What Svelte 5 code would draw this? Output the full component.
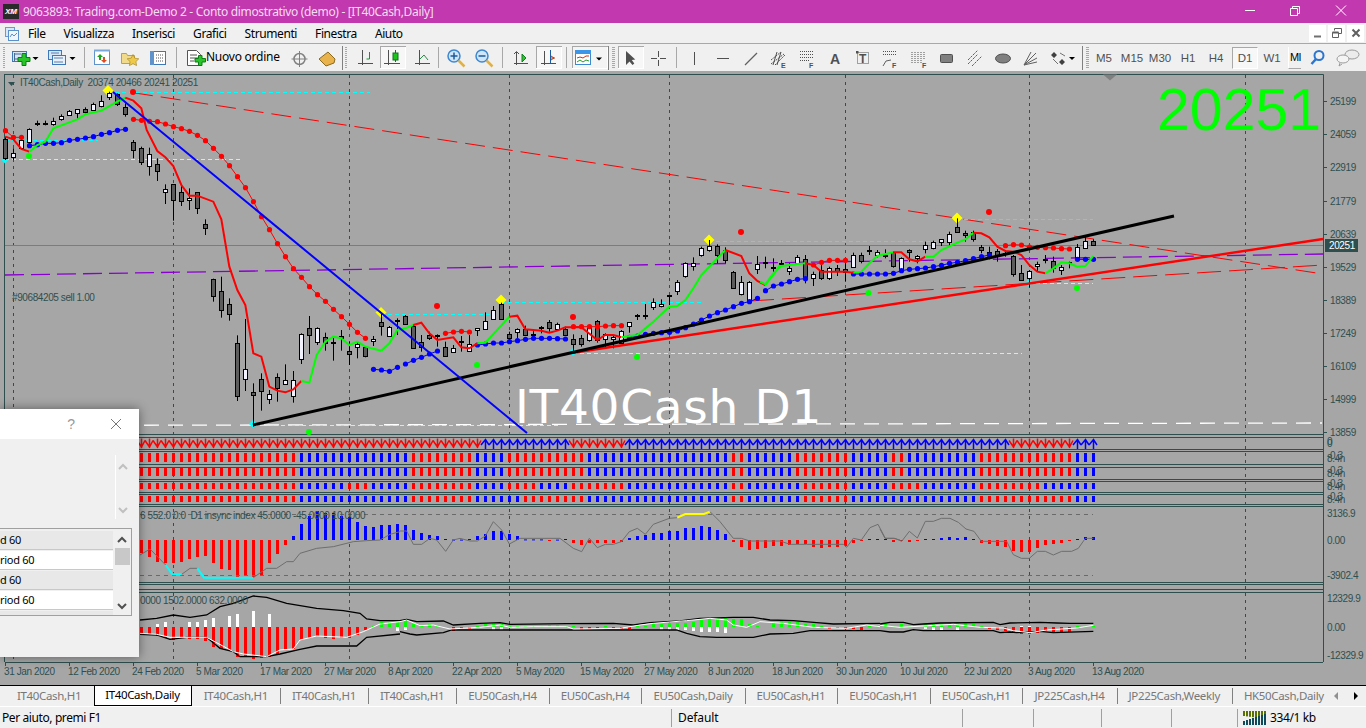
<script>
  const RED = '#ff0000', BLUE = '#0000ff', LIME = '#00ff00', SLATE = '#2f4f4f';
  const cx = (i) => 5 + 8 * i;
  const poly = (ox, oy, a) => {
    const out = [];
    for (let k = 0; k < a.length; k += 2) out.push(`${ox + a[k] / 3},${oy + a[k + 1] / 3}`);
    return out.join(' ');
  };

  const menu = ['File', 'Visualizza', 'Inserisci', 'Grafici', 'Strumenti', 'Finestra', 'Aiuto'];
  const tabs = ['IT40Cash,H1', 'IT40Cash,Daily', 'IT40Cash,H1', 'IT40Cash,H1', 'IT40Cash,H1', 'EU50Cash,H4', 'EU50Cash,H4', 'EU50Cash,Daily', 'EU50Cash,H1', 'EU50Cash,H1', 'EU50Cash,H1', 'JP225Cash,H4', 'JP225Cash,Weekly', 'HK50Cash,Daily'];
  const periods = ['M5', 'M15', 'M30', 'H1', 'H4', 'D1', 'W1'];

  const dates = ['31 Jan 2020', '12 Feb 2020', '24 Feb 2020', '5 Mar 2020', '17 Mar 2020', '27 Mar 2020', '8 Apr 2020', '22 Apr 2020', '5 May 2020', '15 May 2020', '27 May 2020', '8 Jun 2020', '18 Jun 2020', '30 Jun 2020', '10 Jul 2020', '22 Jul 2020', '3 Aug 2020', '13 Aug 2020'];
  const prices = [[25199, 101], [24059, 134], [22919, 167], [21779, 201], [20639, 234], [19529, 267], [18389, 300], [17249, 333], [16109, 366], [14999, 399], [13859, 432]];
  const subLabels = [['0', 445], ['0', 447], ['-0.3', 459], ['8.4n', 462], ['-0.3', 474], ['8.4n', 477], ['-0.3', 487], ['8.4n', 490], ['-0.3', 500], ['8.4n', 503], ['3136.9', 517], ['0.00', 544], ['-3902.4', 579], ['12329.9', 602], ['0.00', 631], ['-12329.9', 659]];
  const grid = [13.5, 173.5, 349.5, 509.5, 669.5, 845.5, 1029.5, 1245.5];
  const seps = [434, 437, 449, 451, 464, 467, 479, 481, 492, 494, 504, 506, 582, 584, 589, 592, 662];

  // candles: top, bottom, wick top, wick bottom, w(hite)/d(ark), in zoomed units
  const seg = (from, oy, rows) => rows.map((r, k) => ({ x: cx(from + k), t: oy + r[0] / 3, b: oy + r[1] / 3, wt: oy + r[2] / 3, wb: oy + r[3] / 3, w: r[4] }));
  const candles = [
    ...seg(0, 80, [[178,235,170,240,0],[218,230,205,240,1],[180,205,175,208,1],[148,188,145,190,1],[128,131,122,138,0],[128,131,122,136,0],[124,134,113,137,1],[108,116,103,122,1],[92,104,90,106,1],[88,100,88,118,1],[87,95,82,100,0],[72,89,68,92,1],[64,79,46,82,1],[40,52,35,60,1],[43,74,40,78,0],[80,100,70,110,0],[187,210,180,235,0],[203,244,200,255,0],[223,260,203,287,1],[253,274,235,303,0],[328,338,313,372,1],[313,361,313,422,0],[335,361,313,378,0],[355,361,325,390,1],[337,386,337,402,0],[433,445,418,465,0],[598,650,596,665,0],[634,691,590,713,0],[673,703,655,722,0],[790,949,766,963,0],[868,898,717,933,1],[937,946,910,1040,0],[898,934,880,992,0],[943,958,930,972,1],[892,925,880,965,0],[899,910,853,912,1],[901,949,873,968,1],[763,838,760,852,1],[745,767,708,822,0],[745,788,742,795,1],[770,787,758,812,0],[787,790,770,842,0],[769,776,750,812,0],[814,823,785,855,0],[792,802,785,835,1],[800,826,798,832,0],[778,785,768,798,1]]),
    ...seg(47, 200, [[367,380,340,407,0],[380,407,378,407,1],[361,364,355,405,0],[347,370,345,372,0],[378,445,375,447,0],[425,440,405,455,0],[406,415,395,420,0],[406,409,403,440,0],[440,467,425,470,0],[443,455,435,458,1],[424,427,408,455,0],[431,451,405,452,1],[385,390,385,408,1],[362,385,337,387,1],[331,358,318,360,1],[312,358,308,360,0],[401,413,395,425,0],[388,398,385,415,1],[388,406,377,408,0],[401,404,393,418,0],[381,384,378,400,0],[367,385,360,395,0],[373,388,368,390,1],[386,404,380,405,0],[418,433,403,455,0],[415,434,405,440,0],[385,422,380,425,1],[362,418,360,428,0],[403,418,400,445,1],[410,415,405,445,1],[392,427,390,430,1],[367,380,367,398,1],[346,349,342,360,0],[346,349,312,358,0],[305,320,295,330,1],[313,320,298,322,1],[286,289,287,315,0],[247,275,240,285,1],[190,230,187,233,1],[190,199,172,212,1],[145,166,140,170,1],[139,152,120,155,1],[139,167,133,190,0],[150,180,142,190,0],[217,265,213,267,0],[247,284,228,286,1],[247,302,243,305,1],[193,208,168,222,1]]),
    ...seg(95, 200, [[187,190,170,205,0],[200,203,175,215,0],[189,192,180,200,0],[203,213,190,225,1],[172,190,165,193,1],[178,236,165,250,0],[222,235,215,258,1],[210,233,195,240,0],[205,236,200,240,1],[205,215,195,228,0],[208,217,180,245,0],[165,200,158,203,1],[165,183,158,190,0],[151,154,138,165,0],[157,167,150,172,1],[164,167,148,175,0],[157,200,155,203,0],[175,215,172,218,1],[151,157,148,185,0],[169,176,165,190,1],[136,149,125,160,1],[127,146,122,148,1],[118,128,118,138,1],[102,125,95,140,1],[82,97,55,97,0],[100,107,92,125,0],[97,118,92,125,0],[142,152,135,160,0],[155,160,140,178,0],[153,165,147,185,0],[159,162,150,170,0],[168,222,165,230,0],[220,241,195,243,0],[214,235,210,262,1],[193,200,185,215,1],[177,180,165,190,0],[184,206,170,218,0],[200,208,195,225,1],[187,190,185,205,0],[142,172,132,175,1],[122,143,110,145,1],[124,136,118,137,0]])
  ];

  // moving average, alternating colour
  const maLines = [
    [RED, 0, 80, [16,170,40,178,64,207,88,215]],
    [LIME, 0, 80, [88,215,112,195,136,185,160,145,208,127,232,118,256,103,304,92,352,65,376,53]],
    [RED, 0, 80, [376,53,400,62,424,85,440,150,472,213,496,232,520,258,544,315,568,347,592,347,640,365,664,418,688,560,712,630,736,675,760,820,784,830,808,920,832,932,856,937,880,928,904,903]],
    [LIME, 0, 80, [904,903,928,908,950,825,976,785,1000,770,1024,775,1048,795,1072,785,1096,800,1144,812]],
    [LIME, 380, 200, [4,452,28,430,52,390,76,385,100,375]],
    [RED, 380, 200, [100,375,124,368,148,400,172,420,220,412,244,442,268,445,292,430]],
    [LIME, 380, 200, [292,430,316,428,388,350]],
    [RED, 380, 200, [388,350,412,347,436,388,484,392,508,398,532,392,556,382,604,382,652,420,676,405,700,405,724,412]],
    [LIME, 380, 200, [724,412,748,408,772,405,820,365,868,320,892,318,916,300,940,265,964,225,1036,150]],
    [RED, 380, 200, [1036,150,1084,168,1108,220,1132,243,1156,255]],
    [LIME, 380, 200, [1156,255,1180,225,1200,195]],
    [LIME, 760, 200, [0,245,16,253,40,220,64,198,112,192,136,190]],
    [RED, 760, 200, [136,190,160,195,184,215,232,215,256,215,280,218]],
    [LIME, 760, 200, [280,218,304,215,328,190,352,168,400,157]],
    [RED, 760, 200, [400,157,424,157,448,178,472,184,496,170]],
    [LIME, 760, 200, [496,170,520,170,544,150,592,128,616,118,640,98]],
    [RED, 760, 200, [640,98,664,100,688,112,712,140,736,153,760,155,784,165,808,195,832,215,856,220]],
    [LIME, 760, 200, [856,220,880,205,904,187,928,190,952,200,976,198,1000,168]]
  ];

  const dotRuns = [
    [RED, 0, 80, [152,172,172]],
    [BLUE, 3, 80, [197,194,190,190,188,181,178,174,170,163,158,151,148]],
    [RED, 16, 80, [118,121,124,125,132,140,146,154,166,182,205,229,257,290,323,365,410,449,491,530,566,592,620,644,664,688,710,733,757,775]],
    [BLUE, 46, 80, [868,870,874,862]],
    [BLUE, 50, 200, [492,481,472,462,453]],
    [RED, 55, 200, [400,396,394,396]],
    [BLUE, 59, 200, [435,432,429,429,425,422,418,415,415,415,416,417]],
    [RED, 71, 200, [380,380,380,380,378,377,377]],
    [BLUE, 78, 200, [412,408,403,400,398,397,393,383,372,360,348,338,330,320,310,305,295]],
    [BLUE, 95, 200, [272,258,252,245,238,236]],
    [RED, 101, 200, [195,187,181,181,181]],
    [BLUE, 106, 200, [222,222,222,222,222,220,212,208,206,204,200,196,190,187,182,176,170,165]],
    [RED, 125, 200, [137,134,135,141,142,143,144,146,147]],
    [BLUE, 134, 200, [178,178,178]]
  ].map(([c, from, oy, ys]) => ({ c, pts: ys.map((y, k) => [cx(from + k) + .5, oy + y / 3]) }));

  const spots = [[RED,133,92],[RED,437,306],[RED,573,317],[RED,741,232],[RED,989,212],[LIME,29,156],[LIME,309,432],[LIME,477,365],[LIME,637,357],[LIME,868.5,293],[LIME,1077,288]];
  const diamonds = [['#ffff00',108,90.5,5.5],['#ffff00',381,312.5,5.5],['#ffff00',501,300,5.5],['#ffff00',709,240,5.5],['#ffff00',957,218,5.5],['#00ffff',5,160,3.5],['#00ffff',253,424,4],['#00ffff',573,352,4],['#00ffff',1029,283,4]];
  const dashes = [['#00ffff',108,92.5,370],['#00ffff',5,140.5,98],['#ffff00',5,159.5,243],['#00ffff',381,314.5,495],['#00ffff',501,302.5,701],['#00ffff',709,241.5,940],['#00ffff',957,219.5,1093],['#ffff00',253,425.5,561],['#ffff00',573,353.5,1022],['#ffff00',1029,283.5,1093]];

  // signal strips
  const runs = (list) => {
    const m = {};
    for (const [a, b, c] of list) for (let i = a; i <= b; i++) m[i] = c;
    return m;
  };
  const R = RED, B = BLUE;
  const rowA = runs([[17,36,R],[37,50,B],[51,58,R],[59,62,B],[63,72,R],[73,90,B],[91,92,R],[93,98,B],[99,105,R],[106,110,B],[111,112,R],[113,121,B],[122,133,R],[134,136,B]]);
  const rowC = runs([[17,36,R],[37,42,B],[43,45,R],[46,50,B],[51,58,R],[59,62,B],[63,66,R],[67,70,B],[71,77,R],[78,90,B],[91,92,R],[93,99,B],[100,105,R],[106,110,B],[111,114,R],[115,121,B],[122,129,R],[130,136,B]]);
  const rowD = runs([[17,36,R],[37,50,B],[51,58,R],[59,64,B],[65,72,R],[73,90,B],[91,92,R],[93,99,B],[100,105,R],[106,121,B],[122,133,R],[134,136,B]]);
  const rows = [[rowA, 453, 9], [rowA, 468, 8], [rowC, 483, 6], [rowD, 496, 6]];
  const idx = Array.from({ length: 120 }, (_, k) => k + 17);
  const arrowDir = runs([[17,59,R],[60,70,B],[71,77,R],[78,125,B],[126,133,R],[134,136,B]]);

  const hist = [-13,-17,-22,-23,-23,-22,-19,-17,-16,-23,-29,-30,-37,-36,-37,-35,-23,-14,-5,4,16,24,29,27,27,24,23,18,14,13,15,15,16,
    15,10,7,5,4,1,.4,.4,1,4,6,9,9,6,4,.6,.6,.6,-1,.4,1,-3,-5,-3,-3,-3,-3,-2,2,4,5,7,7,9,9,12,12,14,13,10,6,-2,-7,-10,-9,-8,-6,-6,-5,-4,-4,-7,-8,-7,-7,-6,-3,-1,1,1,
    1,-2,-1,-2,-1,1,1,2,3,2,3,1,-3,-4,-6,-7,-11,-12,-12,-8,-5,-4,-3,-1,1,3,3];

  // lower oscillator: [up colour, up px, down colour, down px]
  const W = '#ffffff', G = LIME;
  const osc = [[0,0,R,8],[0,0,R,8],[W,3,R,9],[W,5,R,11],[0,0,R,13],[0,0,R,11],[W,5,R,12],[W,5,R,12],[W,7,R,14],[W,9,R,20],[0,0,R,22],[W,11,R,23],[W,13,R,30],[0,0,R,29],[W,16,R,32],[0,0,R,31],[W,13,R,30],[0,0,R,27],[0,0,R,23],[0,0,R,22],[0,0,R,13],[0,0,R,11],[0,0,R,9],[0,0,R,11],[0,0,R,12],[0,0,R,11],[0,0,R,11],[0,0,R,8],[0,0,R,3],[G,1,0,0],[G,5,0,0],[G,5,0,0],[G,5,W,4],
    [G,7,W,3],[G,3,0,0],[G,2,0,0],[G,3,0,0],[G,2,0,0],[0,0,0,0],[0,0,R,4],[0,0,R,2],[0,0,R,2],[G,1,0,0],[G,3,0,0],[G,4,W,3],[G,4,W,3],[G,1,0,0],[G,1,0,0],[G,1,0,0],[G,1,0,0],[G,1,0,0],[G,2,0,0],[G,2,0,0],[G,1,0,0],[G,1,0,0],[0,0,R,3],[0,0,R,2],[0,0,R,1],[G,1,0,0],[0,0,R,2],[0,0,R,2],[0,0,R,3],[G,1,0,0],[G,1,0,0],[G,3,0,0],[G,3,W,3],[G,4,W,3],[G,4,W,3],[G,4,W,3],[G,5,W,4],[G,7,W,5],[G,8,W,5],[G,9,W,5],[G,9,W,6],[G,8,0,0],[G,8,0,0],[G,3,0,0],[G,1,0,0],[0,0,0,0],[G,5,0,0],[G,6,0,0],[G,5,0,0],[G,5,0,0],[G,3,0,0],[G,3,0,0],[G,1,0,0],[0,0,R,2],[0,0,R,1],[0,0,R,2],[0,0,R,2],[0,0,R,3],[G,2,0,0],[G,1,0,0],
    [G,3,0,0],[G,1,0,0],[G,3,0,0],[G,1,0,0],[0,0,0,0],[G,3,W,2],[G,3,W,3],[G,3,W,3],[G,4,0,0],[G,5,W,4],[G,4,0,0],[G,3,0,0],[G,1,0,0],[0,0,R,2],[0,0,R,3],[0,0,R,4],[0,0,R,6],[W,1,R,7],[W,1,R,7],[0,0,R,6],[0,0,R,4],[0,0,R,5],[0,0,R,6],[0,0,R,5],[G,1,0,0],[G,1,0,0],[G,1,0,0]];
</script>

<div class="app">
  <header class="title">
    <span class="logo"><b>XM</b></span>
    <span class="title-text">9063893: Trading.com-Demo 2 - Conto dimostrativo (demo) - [IT40Cash,Daily]</span>
    <svg class="win" width="138" height="23" viewBox="1228 0 138 23">
      <path d="M1245 10.5h10" stroke="#fff" fill="none" />
      <path d="M1290.5 8.5h7v7h-7zM1292.5 8.5v-2h7v7h-2" stroke="#fff" fill="none" />
      <path d="M1336 5.5l10 10M1346 5.5l-10 10" stroke="#fff" fill="none" />
    </svg>
  </header>

  <nav class="menu">
    <svg class="menu-ico" width="16" height="16" viewBox="0 0 16 16">
      <rect x="1.5" y="1.5" width="9" height="9" fill="#d8e8f8" stroke="#6a9bd0" />
      <rect x="4.5" y="4.5" width="10" height="10" fill="#eef5fc" stroke="#5a8fc8" />
      <path d="M6 11l2-3 2 2 3-3" stroke="#5a8fc8" fill="none" />
    </svg>
    {#each menu as m}<span class="menu-item">{m}</span>{/each}
    <span class="fill"></span>
    <span class="mdi"><svg width="12" height="12" viewBox="0 0 12 12"><path d="M2 9.5h7" stroke="#707070" stroke-width="2" /></svg></span>
    <span class="mdi"><svg width="12" height="12" viewBox="0 0 12 12"><path d="M1.5 5.5h6v5h-6zM3.5 3.5v-2h7v5h-3" stroke="#606060" fill="none" /><path d="M1.5 5.5h6" stroke="#606060" stroke-width="2" /></svg></span>
    <span class="mdi"><svg width="12" height="12" viewBox="0 0 12 12"><path d="M2.5 2.5l7 7M9.5 2.5l-7 7" stroke="#606060" stroke-width="2" /></svg></span>
  </nav>

  <div class="toolbar">
    <svg width="206" height="27" viewBox="0 44 206 27">
      <path d="M4 47V68" stroke="#a8a8a8" stroke-width="2" stroke-dasharray="1 1" />
      <rect x="12.5" y="51.5" width="14" height="10" fill="#d7e6f7" stroke="#3d78bb" />
      <path d="M15 54h6M15 59h7M14.500 53v8" stroke="#4a6a90" />
      <path d="M20 55.500h4v-4h4v4h4v4h-4v4h-4v-4h-4z" transform="translate(-2 2)" fill="#28c428" stroke="#0c7c18" />
      <path d="M32.500 57h6l-3 3z" fill="#000" />
      <rect x="48.500" y="50.500" width="13" height="9" fill="#d7e6f7" stroke="#3d78bb" />
      <rect x="52.500" y="55.500" width="13" height="9" fill="#e8f1fb" stroke="#3d78bb" />
      <path d="M51 53h8M54 58h9M54 62h9" stroke="#5a7ea8" />
      <path d="M69.500 57h6l-3 3z" fill="#000" />
      <path d="M84.500 47V68" stroke="#a8a8a8" />
      <rect x="94.500" y="50.500" width="15" height="14" fill="#fff" stroke="#5f93c9" />
      <path d="M94 50.500h16" stroke="#7aa8d8" stroke-width="2" />
      <path d="M100 54l-3 3h2v3h2v-3h2z" fill="#1ba51b" />
      <path d="M103 61l3-3h-2v-3h-2v3h-2z" fill="#e04a20" transform="translate(1 2)" />
      <path d="M121.500 53.500h5l1 2h7v8h-13z" fill="#f2da8c" stroke="#b5a15a" />
      <path d="M133 54.500l1.800 3.700 4 .6-2.900 2.800.7 4-3.600-1.900-3.600 1.900.7-4-2.900-2.800 4-.6z" fill="#efc94a" stroke="#a78a28" stroke-width=".7" />
      <rect x="150.500" y="51.500" width="15" height="13" fill="#fff" stroke="#3d78bb" />
      <rect x="150" y="51" width="4" height="14" fill="#5f93c9" />
      <path d="M156 55h8M156 58h8M156 61h8" stroke="#555" stroke-dasharray="1 1" />
      <path d="M176.500 47V68" stroke="#a8a8a8" />
      <path d="M187.500 50.500h9l4 4v11h-13z" fill="#fff" stroke="#555" />
      <path d="M190 55h7M190 58h8M190 61h4" stroke="#555" />
      <path d="M195 58.500h3.500v-3h3.500v3h3.500v3.500h-3.500v3.500h-3.500v-3.500H195z" fill="#28c428" stroke="#0c7c18" />
    </svg>
    <span class="order">Nuovo ordine</span>
    <svg width="808" height="27" viewBox="282 44 808 27">
      <g fill="none" stroke="#808080">
        <circle cx="299.500" cy="59" r="5.500" stroke-width="1.500" />
        <path d="M299.500 51v16M291.500 59h16" />
      </g>
      <path d="M319 59l9-7 7 7-1 4-8 3z" fill="#e9b24a" stroke="#8a6a20" />
      <path d="M342.500 46V70" stroke="#808080" />
      <path d="M346 47V68" stroke="#a8a8a8" stroke-width="2" stroke-dasharray="1 1" />
      <g fill="none" stroke="#505050">
        <path d="M362.500 50v15M358 63.500h15" />
        <path d="M369.500 52v7h-3" stroke="#0a9a2a" />
      </g>
      <rect x="380.500" y="46.500" width="25" height="22" fill="#f7f7f7" stroke="#a8a8a8" />
      <path d="M380 68.500h26M405.500 47v22" stroke="#fff" />
      <g fill="none" stroke="#505050">
        <path d="M388.500 50v15M384 63.500h16" />
        <path d="M395.500 50v12" stroke="#107020" />
      </g>
      <rect x="393" y="53" width="5" height="7" fill="#1cc41c" stroke="#107020" />
      <g fill="none" stroke="#505050">
        <path d="M419.500 50v15M415 63.500h15" />
        <path d="M420 59l4-4 4 5" stroke="#2a8a4a" />
      </g>
      <path d="M438.500 47V68" stroke="#a8a8a8" />
      <circle cx="454" cy="56" r="6" fill="#cfe6fa" stroke="#3d88d0" stroke-width="1.500" />
      <path d="M450.500 56h7M454 52.500v7" stroke="#1d5a9a" stroke-width="1.500" />
      <path d="M458.500 60.500l6 6" stroke="#e3b13c" stroke-width="2.500" />
      <circle cx="482" cy="56" r="6" fill="#cfe6fa" stroke="#3d88d0" stroke-width="1.500" />
      <path d="M478.500 56h7" stroke="#1d5a9a" stroke-width="1.500" />
      <path d="M486.500 60.500l6 6" stroke="#e3b13c" stroke-width="2.500" />
      <path d="M502.500 47V68" stroke="#a8a8a8" />
      <g fill="none" stroke="#505050">
        <path d="M516.500 52v13M514 54l2.500-2.500L519 54M514 63.500h14" />
      </g>
      <path d="M522 54l4 4-4 4z" fill="#30c030" stroke="#108020" />
      <rect x="536.500" y="46.500" width="25" height="22" fill="#f7f7f7" stroke="#a8a8a8" />
      <path d="M536 68.500h26M561.500 47v22" stroke="#fff" />
      <g fill="none" stroke="#505050">
        <path d="M544.500 51v14M541 63.500h15" />
      </g>
      <path d="M550.500 50v14" stroke="#1a5aa0" />
      <path d="M551 58h4M551 56l3 2-3 2" stroke="#b83a10" fill="none" />
      <path d="M566.500 47V68" stroke="#a8a8a8" />
      <rect x="572.500" y="46.500" width="35" height="22" fill="#f4f4f4" stroke="#a8a8a8" />
      <path d="M572 68.500h36M607.500 47v22" stroke="#fff" />
      <rect x="575.500" y="50.500" width="15" height="14" fill="#fff" stroke="#3d88d0" />
      <rect x="575" y="50" width="16" height="4" fill="#3d95e8" />
      <path d="M577 58l3-1 3 1 3-2 3 0" stroke="#d03010" fill="none" />
      <path d="M577 62l3-2 3 2 3-2 3 1" stroke="#20a020" fill="none" />
      <path d="M596 57.500h6l-3 3z" fill="#000" />
      <path d="M608.500 46V70" stroke="#808080" />
      <path d="M613.500 47V68" stroke="#a8a8a8" stroke-width="3" stroke-dasharray="1 1" />
      <rect x="618.500" y="46.500" width="25" height="22" fill="#f7f7f7" stroke="#a8a8a8" />
      <path d="M618 68.500h26M643.500 47v22" stroke="#fff" />
      <path d="M626 51l0 14 3.500-3.500 3 3.500 0 0 1.800-1.500-2.500-3.500 3.500-.5z" fill="#505050" />
      <path d="M658.500 51v6M658.500 60v6M651 58.500h6M660 58.500h6" stroke="#505050" />
      <path d="M676.500 47V68" stroke="#a8a8a8" />
      <path d="M694.500 52v13" stroke="#505050" />
      <path d="M717 58.500h12" stroke="#505050" />
      <path d="M745 65l12-12" stroke="#606060" stroke-width="1.200" />
      <g stroke="#505050" fill="none">
        <path d="M771 60l10-8M771 64l13-10M775 65l10-10" stroke-dasharray="2 1" />
        <path d="M777 52l-4 13M781 52l-4 13" />
      </g>
      <text class="tool-l" x="781" y="67.500">E</text>
      <path d="M800 51.500h13M800 54.500h13M800 57.500h13M800 60.500h9" stroke="#505050" stroke-dasharray="1 1" />
      <text class="tool-l" x="809" y="67.500">F</text>
      <text class="tool-a" x="830" y="64">A</text>
      <rect x="857.500" y="52.500" width="11" height="11" fill="none" stroke="#505050" stroke-dasharray="1 1" />
      <rect x="856" y="51" width="2.500" height="2.500" fill="#505050" />
      <text class="tool-t" x="859" y="63">T</text>
      <path d="M883 51.500h14M883 54.500h14" stroke="#505050" stroke-dasharray="1 1" />
      <path d="M883 66l3-5 5-1" stroke="#606060" fill="none" />
      <text class="tool-l" x="892" y="67.500">F</text>
      <path d="M912 52v11M915 52v11M918 52v11M921 52v11M924 52v8" stroke="#505050" stroke-dasharray="1 1" />
      <text class="tool-l" x="922" y="67.500">F</text>
      <rect x="940.500" y="54.500" width="12" height="8" rx="1" fill="#808080" stroke="#505050" />
      <path d="M968 64l10-10M972 66l10-10" stroke="#606060" stroke-dasharray="2.500 1" fill="none" />
      <path d="M968 60l10-10" stroke="#606060" stroke-dasharray="2.500 1" />
      <ellipse cx="1003" cy="58.500" rx="7.500" ry="4.500" fill="#808080" stroke="#505050" />
      <path d="M1024 65l12-12M1024 65l13-7M1024 65l13-3M1024 65l7-13" stroke="#606060" fill="none" />
      <path d="M1054 52l3 3-3 3-3-3zM1062 59l3 3-3 3-3-3z" fill="#404040" />
      <path d="M1053 59l5 5M1060 53l5 3" stroke="#707070" />
      <path d="M1069 57h6l-3 3z" fill="#000" />
      <path d="M1082.500 46V70" stroke="#808080" />
      <path d="M1087.500 47V68" stroke="#a8a8a8" stroke-width="3" stroke-dasharray="1 1" />
    </svg>
    {#each periods as p}<span class="tf" class:on={p === 'D1'}>{p}</span>{/each}
    <span class="mn">Ml</span>
    <svg class="end" width="65" height="27" viewBox="1301 44 65 27">
      <circle cx="1320" cy="55.500" r="4.500" fill="none" stroke="#2a75d0" stroke-width="2" />
      <path d="M1317 59l-4.500 5" stroke="#2a75d0" stroke-width="2.500" />
      <ellipse cx="1353" cy="54.500" rx="7" ry="4.500" fill="#ececec" stroke="#9a9a9a" />
      <ellipse cx="1344" cy="59" rx="6" ry="4" fill="#f4f4f4" stroke="#9a9a9a" />
      <path d="M1341 63l-1 3 3-2" fill="#f4f4f4" stroke="#9a9a9a" />
    </svg>
  </div>

  <main class="chart">
    <svg class="canvas" width="1366" height="614" viewBox="0 71 1366 614">
      <rect x="0" y="71" width="1366" height="614" fill="#a6a6a6" />
      <path d="M4.500 74.500H1323.500V662M4.500 74V662" stroke={SLATE} fill="none" />
      <path d="M1103 74.500h14l-7 6z" fill="#808080" />

      {#each seps as y}<path d={`M5 ${y + .5}H1323`} stroke={SLATE} />{/each}
      {#each grid as x}<path d={`M${x} 75V662`} stroke={SLATE} stroke-dasharray="3 4" />{/each}

      <path d="M5 245.500H1323" stroke="#7c7c7c" />
      <path d="M5 275L1323 254" stroke="#8a00d0" stroke-width="1.300" stroke-dasharray="19 7" fill="none" />
      <path d="M0 425.500L1322 423" stroke="#fff" stroke-width="1.300" stroke-dasharray="15 9" fill="none" />
      <path d="M133 92.700L1323 274" stroke={RED} stroke-dasharray="20 8" fill="none" />
      <path d="M750 301L1323 265" stroke={RED} stroke-dasharray="24 8" fill="none" />
      {#each dashes as [c, x, y, e]}<path d={`M${x} ${y}H${e}`} stroke={c} stroke-dasharray="4 3" />{/each}

      <text class="big" x="515" y="423">IT40Cash D1</text>
      <text class="price-big" x="1157" y="130">20251</text>
      <text class="lbl" x="20" y="86">IT40Cash,Daily&nbsp; 20374 20466 20241 20251</text>
      <path d="M8 82h7l-3.500 4z" fill={SLATE} />
      <text class="lbl" x="12" y="301">#90684205 sell 1.00</text>

      {#each diamonds as [c, x, y, s]}<path d={`M${x} ${y - s}l${s} ${s}-${s} ${s}-${s}-${s}z`} fill={c} />{/each}

      {#each candles as c}
        <path d={`M${c.x + .5} ${c.wt}V${c.wb}`} stroke="#000" />
        <rect class="cr" x={c.x - 1.5} y={Math.round(c.t) + .5} width="4" height={Math.max(1, Math.round(c.b - c.t))} fill={c.w ? '#f2f2ff' : '#5c5c5c'} stroke="#000" />
      {/each}

      {#each dotRuns as d}
        {#if d.pts.length > 1}<polyline points={d.pts.map((p) => p.join(',')).join(' ')} fill="none" stroke={d.c} />{/if}
        {#each d.pts as p}<circle cx={p[0]} cy={p[1]} r="2.600" fill={d.c} />{/each}
      {/each}
      {#each maLines as [c, ox, oy, a]}<polyline points={poly(ox, oy, a)} fill="none" stroke={c} stroke-width="2" />{/each}
      {#each spots as [c, x, y]}<circle cx={x} cy={y} r="3" fill={c} />{/each}

      <path d="M573 352.700L1323 239" stroke={RED} stroke-width="2.400" fill="none" />
      <path d="M253 425L1174 216" stroke="#000" stroke-width="3" fill="none" />
      <path d="M113 92L527 433" stroke={BLUE} stroke-width="2" fill="none" />

      <!-- signal strips -->
      {#each idx as i}
        {#if arrowDir[i] === RED}
          <path d={`M${cx(i) - 4} 440.500L${cx(i) + .5} 447L${cx(i) + 4} 440.500M${cx(i) + .5} 438.500V448`} stroke={RED} stroke-width="1.500" fill="none" />
        {:else}
          <path d={`M${cx(i) - 4} 445L${cx(i) + .5} 439.500L${cx(i) + 4} 445M${cx(i) + .5} 439.500V449`} stroke={BLUE} stroke-width="1.500" fill="none" />
        {/if}
        {#each rows as [r, y, h]}<rect x={cx(i) - 1} {y} width="3" height={h} fill={r[i]} />{/each}
        <rect x={cx(i) - 1} y={hist[i - 17] > 0 ? 540 - hist[i - 17] : 540} width="3" height={Math.max(1, Math.abs(hist[i - 17]))} fill={hist[i - 17] > 0 ? BLUE : RED} />
        {#if osc[i - 17]}
          {#if osc[i - 17][1]}<rect x={cx(i) - 1} y={627 - osc[i - 17][1]} width="3" height={osc[i - 17][1]} fill={osc[i - 17][0]} />{/if}
          {#if osc[i - 17][3]}<rect x={cx(i) - 1} y="627" width="3" height={osc[i - 17][3]} fill={osc[i - 17][2]} />{/if}
        {/if}
      {/each}

      <path d="M140 514.500H1093M140 575.500H1093" stroke="#6a6a6a" stroke-dasharray="4 4" />
      <polyline points={poly(0, 400, [420,465,450,447,497,495])} fill="none" stroke="#6e6e6e" />
      <polyline points={poly(0, 400, [545,523,570,505,592,505])} fill="none" stroke="#6e6e6e" />
      <polyline points={poly(0, 400, [497,495,517,523,545,523])} fill="none" stroke="#00ffff" stroke-width="2" />
      <polyline points={poly(0, 400, [592,505,612,533,760,533])} fill="none" stroke="#00ffff" stroke-width="2" />
      <polyline points={poly(0, 400, [760,533,800,505,830,505,860,485,880,485,900,460,950,445,1000,440,1060,425,1100,422,1140,420,1170,403,1200,395])} fill="none" stroke="#6e6e6e" />
      <polyline points={poly(400, 430, [0,303,20,303,40,343,65,343,90,325,110,330,137,364,160,330,180,325,210,333,232,333,256,318,280,275,305,300,328,342,360,325,480,325,520,355,545,365,568,325,592,353,616,343,640,343,664,335,688,305,712,295,736,313,760,283,808,265,832,263])} fill="none" stroke="#6e6e6e" />
      <polyline points={poly(400, 430, [832,263,856,252,912,252,930,245])} fill="none" stroke="#ffff00" stroke-width="2" />
      <polyline points={poly(400, 430, [930,245,960,275,1000,325,1024,325,1050,333,1140,333,1170,343,1220,343,1330,343,1340,352,1360,325,1384,330,1410,293,1434,283,1456,325,1480,325,1500,330])} fill="none" stroke="#6e6e6e" />
      <polyline points={poly(880, 434, [0,285,15,313,45,313,65,322,88,292,112,312,136,262,160,262,184,253,210,253,235,265,258,285,282,292,304,322,380,322,400,362,424,373,448,373,472,352,496,352,520,363,545,352,575,352,595,343,616,313,640,313])} fill="none" stroke="#6e6e6e" />

      <g fill="none" stroke="#000" stroke-width="1.300">
        <polyline points={poly(0, 400, [420,660,470,655,520,645,570,652,620,645,660,620,700,610,760,588,800,592,860,610,950,625,1030,632,1080,640,1100,657,1140,662,1200,662])} />
        <polyline points={poly(0, 400, [420,703,470,705,510,718,560,712,620,712,660,745,700,755,720,770,800,770,840,762,900,748,950,738,1070,738,1100,712,1200,702])} />
        <polyline points={poly(400, 430, [0,572,20,568,50,575,130,573,160,585,240,580,300,578,330,583,500,581,640,580,700,585,750,578,840,573,900,565,1000,562,1060,562,1110,570,1180,572,1250,578,1300,582,1440,580])} />
        <polyline points={poly(400, 430, [0,605,30,612,50,615,130,608,155,600,240,600,520,600,700,600,830,600,860,610,900,620,950,622,1060,622,1110,612,1180,610,1230,602,1440,602])} />
        <polyline points={poly(880, 434, [0,570,30,565,70,565,100,572,130,570,180,567,340,565,360,572,390,567,480,565,530,567,570,568,640,568])} />
        <polyline points={poly(880, 434, [0,590,30,594,70,594,100,587,130,590,200,590,340,590,360,596,390,594,410,596,480,592,520,596,640,592])} />
      </g>
      <g fill="none" stroke="#fff">
        <polyline points={poly(0, 400, [420,700,470,703,510,712,620,712,700,755,730,762,800,770,840,750,880,747,900,720,950,708,1040,712,1090,695,1140,672,1200,665])} />
        <polyline points={poly(400, 430, [0,575,20,570,60,587,100,585,150,597,240,592,300,585,330,592,400,590,500,590,520,597,660,595,720,585,760,580,860,572,930,565,980,570,1000,585,1040,592,1080,575,1150,580,1240,592,1340,595,1400,585,1440,590])} />
        <polyline points={poly(880, 434, [0,574,60,580,130,576,220,571,300,580,370,582,400,590,450,596,500,588,590,582,640,574])} />
      </g>

      <text class="lbl" x="140" y="519">6 552.0 0:0&nbsp; D1 insync index 45.0000 -45.0000 10.0000</text>
      <text class="lbl" x="140" y="604">0000 1502.0000 632.0000</text>

      {#each prices as [p, y]}
        <path d={`M1324 ${y + .5}h3`} stroke={SLATE} />
        <text class="lbl" x="1330" y={y + 4}>{p}</text>
      {/each}
      <rect x="1325" y="239" width="33" height="13" fill={SLATE} />
      <text class="lbl live" x="1329" y="249">20251</text>
      {#each subLabels as [t, y]}<text class="lbl" x="1327" {y}>{t}</text>{/each}

      {#each dates as d, k}
        <path d={`M${5.500 + 64 * k} 662v4`} stroke={SLATE} />
        <text class="lbl" x={4 + 64 * k} y="675">{d}</text>
      {/each}
    </svg>

    <section class="dialog">
      <div class="dlg-head">
        <span class="q">?</span>
        <svg width="14" height="14" viewBox="0 0 14 14"><path d="M2 2l10 10M12 2L2 12" stroke="#777" fill="none" /></svg>
      </div>
      <div class="dlg-body">
        <div class="scroll-a">
          <svg width="10" height="8" viewBox="0 0 10 8"><path d="M1 6l4-4 4 4" stroke="#c0c0c0" stroke-width="2" fill="none" /></svg>
          <svg width="10" height="8" viewBox="0 0 10 8"><path d="M1 2l4 4 4-4" stroke="#c0c0c0" stroke-width="2" fill="none" /></svg>
        </div>
        <div class="list">
          <div class="rows">
            <div class="row alt">d 60</div>
            <div class="row">riod 60</div>
            <div class="row alt">d 60</div>
            <div class="row">riod 60</div>
            <div class="row alt"></div>
          </div>
          <div class="bar">
            <svg width="10" height="8" viewBox="0 0 10 8"><path d="M1 6l4-4 4 4" stroke="#505050" stroke-width="2" fill="none" /></svg>
            <span class="thumb"></span>
            <span class="fill"></span>
            <svg width="10" height="8" viewBox="0 0 10 8"><path d="M1 2l4 4 4-4" stroke="#505050" stroke-width="2" fill="none" /></svg>
          </div>
        </div>
      </div>
    </section>
  </main>

  <div class="tabs">
    <div class="tab-strip">
      {#each tabs as t, k}<span class="tab" class:active={k === 1} class:first={k === 0} class:nosep={k === 2}>{t}</span>{/each}
    </div>
    <svg class="tab-arrows" width="36" height="20" viewBox="0 0 36 20">
      <path d="M8 6v8l-4-4z" fill="#909090" />
      <path d="M24 6v8l4-4z" fill="#000" />
    </svg>
  </div>

  <footer class="status">
    <span class="cell c1">Per aiuto, premi F1</span>
    <span class="cell c2">Default</span>
    <span class="cell c3"></span>
    <span class="cell c4"></span>
    <span class="cell c5"></span>
    <span class="cell c6"></span>
    <span class="cell c7">
      <svg width="24" height="14" viewBox="0 0 24 14">
        {#each Array.from({ length: 8 }) as _, k}
          <rect x={k * 3} y="0" width="2" height={5 + k * .4} fill="#5a7000" />
          <rect x={k * 3} y={10 - k} width="2" height={4 + k} fill="#0f4a5a" />
        {/each}
      </svg>
      334/1 kb
    </span>
  </footer>
</div>

<style>
  :global(body) { margin: 0; overflow: hidden; }
  .app { width: 1366px; height: 728px; display: flex; flex-direction: column; background: #f0f0f0; font-family: "Noto Sans", "Open Sans", sans-serif; font-size: 12px; color: #000; overflow: hidden; }
  svg { display: block; flex: none; }
  .title { height: 23px; flex: none; background: #c238ae; display: flex; align-items: center; color: #f6dcf2; }
  .logo { width: 16px; height: 15px; margin: 0 4px 0 3px; background: #2a2a2a; display: flex; align-items: center; justify-content: center; }
  .logo b { font: italic bold 8px "Liberation Sans", sans-serif; color: #fff; text-shadow: 1px 0 #d02020; }
  .title-text { flex: 1; font-size: 12px; letter-spacing: -.33px; }
  .menu { height: 20px; flex: none; border-bottom: 1px solid #a8a8a8; display: flex; align-items: center; background: #f0f0f0; }
  .menu-ico { margin: 1px 8px 0 4px; }
  .menu-item { padding-right: 18px; font-size: 12px; letter-spacing: -.4px; }
  .fill { flex: 1; }
  .mdi { width: 17px; height: 17px; margin-right: 2px; background: #fff; display: flex; align-items: center; justify-content: center; }
  .toolbar { height: 27px; flex: none; display: flex; align-items: center; background: #f0f0f0; }
  .order { width: 76px; flex: none; font-size: 12px; margin-top: -3px; white-space: nowrap; letter-spacing: -.25px; }
  .tf { width: 28px; height: 22px; flex: none; display: flex; align-items: center; justify-content: center; box-sizing: border-box; color: #505050; font: 11.5px "Liberation Sans", sans-serif; }
  .tf.on { width: 26px; margin-left: 2px; background: #f7f7f7; border: 1px solid #a8a8a8; border-right-color: #fff; border-bottom-color: #fff; }
  .mn { width: 13px; height: 22px; margin-left: 2px; flex: none; box-sizing: border-box; border-left: 1px solid #fff; border-bottom: 1px solid #a8a8a8; overflow: hidden; display: flex; align-items: center; font: 11px "Liberation Sans", sans-serif; color: #000; padding-left: 1px; letter-spacing: -.3px; }
  .end { margin-left: -1px; }
  .tool-l { font: bold 7px "Liberation Sans", sans-serif; fill: #505050; }
  .tool-a { font: bold 14px "Liberation Sans", sans-serif; fill: #505050; }
  .tool-t { font: bold 12px "Liberation Sans", sans-serif; fill: #505050; }
  .chart { height: 614px; flex: none; position: relative; overflow: hidden; }
  .canvas { position: absolute; left: 0; top: 0; }
  .cr { shape-rendering: crispEdges; }
  .lbl { font: 10px "Liberation Sans", sans-serif; letter-spacing: -.4px; fill: #2f4f4f; }
  .live { fill: #fff; }
  .big { font: 47px "DejaVu Sans", sans-serif; fill: #fff; letter-spacing: .7px; }
  .price-big { font: 59px "Liberation Sans", sans-serif; fill: #00ff00; }
  .dialog { position: absolute; left: 0; top: 338px; width: 139px; height: 248px; background: #f0f0f0; box-shadow: 0 0 10px rgba(0, 0, 0, .45); display: flex; flex-direction: column; }
  .dlg-head { height: 30px; flex: none; background: #fff; display: flex; align-items: center; justify-content: flex-end; gap: 34px; padding-right: 16px; color: #888; }
  .q { font: 14px "Liberation Sans", sans-serif; color: #999; }
  .dlg-body { flex: 1; position: relative; display: flex; flex-direction: column; }
  .scroll-a { height: 64px; margin: 16px 0 0 115px; width: 15px; box-sizing: border-box; border-left: 1px solid #fff; display: flex; flex-direction: column; justify-content: space-between; align-items: center; padding: 8px 0 5px; }
  .list { height: 88px; margin-top: 9px; width: 132px; box-sizing: border-box; border: 1px solid #a0a0a0; border-left: 0; display: flex; background: #f0f0f0; }
  .rows { width: 113px; flex: none; padding-top: 2px; overflow: hidden; }
  .row { height: 19px; margin-bottom: 1px; background: #fff; border-bottom: 1px solid #c8c8c8; font-size: 11px; line-height: 17px; box-sizing: border-box; letter-spacing: -.3px; }
  .row.alt { background: #e8e8e8; }
  .bar { flex: 1; display: flex; flex-direction: column; align-items: center; padding: 7px 0 5px; box-sizing: border-box; }
  .thumb { width: 15px; height: 17px; margin-top: 4px; background: #c8c8c8; }
  .tabs { height: 21px; flex: none; background: #f0f0f0; border-top: 1px solid #000; box-sizing: border-box; display: flex; }
  .tab-strip { width: 1330px; flex: none; display: flex; overflow: hidden; padding-left: 5px; box-sizing: border-box; }
  .tab { flex: none; padding: 0 12px 0 11px; height: 16px; margin-top: 2px; line-height: 15px; color: #777; font-size: 11.5px; letter-spacing: -.35px; border-left: 1px solid #808080; white-space: nowrap; }
  .tab.first { border-left-color: transparent; margin-right: 1px; }
  .tab.nosep { border-left-color: transparent; }
  .tab.active { height: 19px; margin-top: 0; line-height: 18px; color: #000; background: #fff; border: 1px solid #000; border-top: 0; padding: 0 11px 0 10px; }
  .status { height: 22px; flex: none; display: flex; align-items: center; background: #f0f0f0; font-size: 12px; border-top: 1px solid #fff; box-sizing: border-box; }
  .cell { height: 18px; line-height: 18px; box-sizing: border-box; border-left: 1px solid #a0a0a0; padding-left: 6px; display: flex; align-items: center; gap: 3px; flex: none; letter-spacing: -.4px; }
  .c1 { width: 671px; border-left: 0; padding-left: 2px; }
  .c2 { width: 291px; letter-spacing: -.1px; }
  .c3 { width: 71px; }
  .c4 { width: 68px; }
  .c5 { width: 70px; }
  .c6 { width: 66px; }
  .c7 { width: 129px; padding-left: 5px; }
</style>
